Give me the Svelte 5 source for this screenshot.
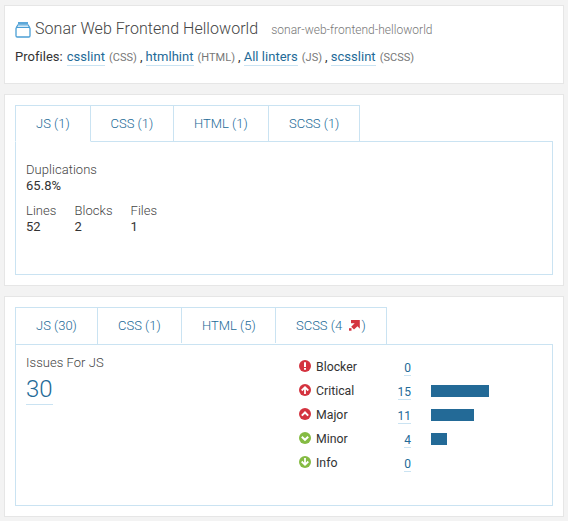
<script>
  const profiles = [
    { name: 'csslint', lang: 'CSS' },
    { name: 'htmlhint', lang: 'HTML' },
    { name: 'All linters', lang: 'JS' },
    { name: 'scsslint', lang: 'SCSS' },
  ];
  const dupTabs = [
    { label: 'JS (1)', w: 76 },
    { label: 'CSS (1)', w: 83 },
    { label: 'HTML (1)', w: 95 },
    { label: 'SCSS (1)', w: 91 },
  ];
  const issueTabs = [
    { label: 'JS (30)', w: 83 },
    { label: 'CSS (1)', w: 84 },
    { label: 'HTML (5)', w: 94 },
    { label: 'SCSS (4', w: 111, trend: true },
  ];
  const measures = [
    { label: 'Lines', value: '52' },
    { label: 'Blocks', value: '2' },
    { label: 'Files', value: '1' },
  ];
  const severities = [
    { name: 'Blocker', count: 0, bar: 0, color: '#d4333f', icon: 'M6 2.2V6.9M6 8V9.8', sw: 2 },
    { name: 'Critical', count: 15, bar: 58, color: '#d4333f', icon: 'M6 10V3.6M2.7 6.5L6 3.2L9.3 6.5', sw: 1.8 },
    { name: 'Major', count: 11, bar: 43, color: '#d4333f', icon: 'M2.8 7.6L6 4.5L9.2 7.6', sw: 2 },
    { name: 'Minor', count: 4, bar: 16, color: '#85bb43', icon: 'M2.8 4.7L6 7.8L9.2 4.7', sw: 2 },
    { name: 'Info', count: 0, bar: 0, color: '#85bb43', icon: 'M6 2V8.4M2.7 5.5L6 8.8L9.3 5.5', sw: 1.8 },
  ];
</script>

<main>
  <section class="panel head">
    <h1>
      <svg width="16" height="16" viewBox="0 0 16 16" fill="none" stroke="#4b9fd5">
        <rect x="1" y="5.4" width="14" height="9.6" rx="1.2" stroke-width="1.3" />
        <path d="M1.4 5.4L3 2.8H13L14.6 5.4" stroke-width="1.2" />
        <path d="M3 1H13" stroke-width="1.8" />
      </svg>
      <span class="name">Sonar Web Frontend Helloworld</span>
      <span class="key">sonar-web-frontend-helloworld</span>
    </h1>
    <p class="profiles">
      <span class="caption">Profiles:</span>
      {#each profiles as p, i}
        <span class="profile"><a href="#profile">{p.name}</a><small>({p.lang})</small></span>
        {#if i < profiles.length - 1}<span>,</span>{/if}
      {/each}
    </p>
  </section>

  <section class="panel dup">
    <nav class="tabs">
      {#each dupTabs as t, i}
        <div class="tab" class:active={i === 0} style:width="{t.w}px">{t.label}</div>
      {/each}
    </nav>
    <div class="body">
      <div class="measure"><span>Duplications</span><b>65.8%</b></div>
      <div class="row">
        {#each measures as m}
          <div class="measure"><span>{m.label}</span><b>{m.value}</b></div>
        {/each}
      </div>
    </div>
  </section>

  <section class="panel issues">
    <nav class="tabs">
      {#each issueTabs as t}
        <div class="tab" style:width="{t.w}px">
          {t.label}{#if t.trend}<svg class="trend" width="11" height="11" viewBox="0 0 11 11" fill="#d4333f">
              <path d="M2 0H10.8V8.8L8.5 6.2L5 9.4L2.2 6.8L5.7 3.3H2Z" />
              <rect x="0" y="8.2" width="2.5" height="2.5" />
            </svg>){/if}
        </div>
      {/each}
    </nav>
    <div class="body">
      <div class="total"><span>Issues For JS</span><a href="#issues">30</a></div>
      <div class="severities">
        {#each severities as s}
          <div class="severity">
            <svg width="12" height="12" viewBox="0 0 12 12">
              <circle cx="6" cy="6" r="6" fill={s.color} />
              <path d={s.icon} fill="none" stroke="#fff" stroke-width={s.sw} />
            </svg>
            <span class="label">{s.name}</span>
            <span class="count"><a href="#issues">{s.count}</a></span>
            <i style:width="{s.bar}px"></i>
          </div>
        {/each}
      </div>
    </div>
  </section>
</main>

<style>
  :global(body) { background: #f3f3f3; }
  main {
    box-sizing: border-box;
    width: 568px;
    height: 521px;
    padding: 5px 4px 4px;
    display: flex;
    flex-direction: column;
    gap: 10px;
    font: 13px/16px Roboto, sans-serif;
    color: #444;
    overflow: hidden;
  }
  .panel {
    box-sizing: border-box;
    background: #fff;
    border: 1px solid #e6e6e6;
    padding: 10px;
    flex: none;
    display: flex;
    flex-direction: column;
  }
  .head { height: 79px; padding-top: 11px; }
  .dup { height: 192px; }
  .issues { height: 221px; }
  h1 {
    margin: 0;
    height: 24px;
    display: flex;
    align-items: baseline;
    font-size: 16px;
    font-weight: 300;
    line-height: 24px;
    white-space: nowrap;
  }
  h1 svg { align-self: flex-start; margin: 5px 4px 0 0; }
  .name { letter-spacing: 0.05px; }
  .key { margin-left: 13px; font-size: 12px; color: #777; letter-spacing: 0.02px; }
  .profiles {
    display: flex;
    align-items: baseline;
    gap: 3px;
    margin: 6px 0 0;
    line-height: 20px;
    letter-spacing: 0.03px;
    white-space: nowrap;
    color: #333;
  }
  .caption { margin-right: 1px; }
  .profile { display: flex; align-items: baseline; gap: 4px; }
  a { color: #236a97; text-decoration: none; border-bottom: 1px solid #cae3f2; }
  .profiles a { font-weight: 450; line-height: 17px; }
  small { font-size: 11px; color: #777; }
  .tabs {
    display: flex;
    height: 37px;
    flex: none;
    margin-bottom: -1px;
    box-sizing: border-box;
  }
  .issues .tabs { height: 38px; }
  .tab {
    box-sizing: border-box;
    border: 1px solid #cae3f2;
    border-left: 0;
    padding-left: 20px;
    line-height: 35px;
    font-weight: 300;
    color: #236a97;
    white-space: nowrap;
  }
  .tab:first-child { border-left: 1px solid #cae3f2; }
  .dup .tab:nth-child(2) { padding-left: 19.5px; }
  .tab.active { border-bottom-color: #fff; position: relative; z-index: 1; }
  .issues .tab:nth-child(2), .issues .tab:nth-child(3) { position: relative; }
  .issues .tab:nth-child(2)::after, .issues .tab:nth-child(3)::after {
    content: '';
    position: absolute;
    right: -1px;
    bottom: 0;
    width: 1px;
    height: 1px;
    background: #fff;
  }
  .trend { margin: 0 1.5px 0 7px; vertical-align: -1px; }
  .body {
    flex: 1;
    box-sizing: border-box;
    border: 1px solid #cae3f2;
    padding: 20px 10px;
  }
  .measure { display: flex; flex-direction: column; }
  .measure span, .total span { font-weight: 300; letter-spacing: 0.04px; }
  .measure b { font-weight: 450; color: #333; letter-spacing: 0.05px; }
  .row { display: flex; gap: 18px; margin-top: 9px; }
  .issues .body { display: flex; padding: 10px; }
  .total { width: 273px; display: flex; flex-direction: column; align-items: flex-start; }
  .total a { font-size: 24px; line-height: 30px; font-weight: 300; margin-top: 3px; }
  .severity { height: 24px; display: flex; align-items: flex-start; }
  .severity svg { margin: 5px 5px 0 0; }
  .label { width: 61px; margin-top: 4px; font-size: 12.3px; color: #333; }
  .count { width: 34px; margin-top: 5px; font-size: 12px; text-align: right; }
  .severity i { height: 12px; margin: 6px 0 0 20px; background: #236a97; }
</style>
